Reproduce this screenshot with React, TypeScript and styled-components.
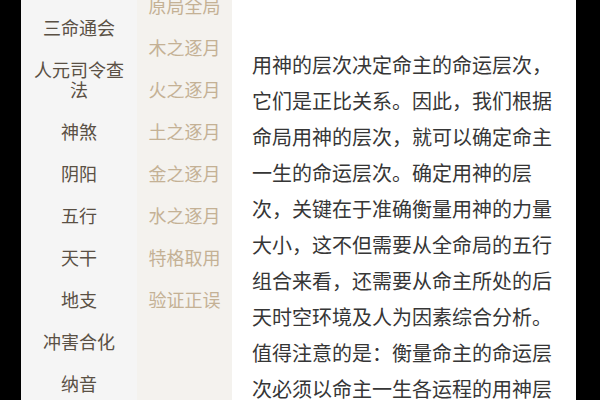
import styled, { createGlobalStyle } from 'styled-components';

const GlobalStyle = createGlobalStyle`
  html, body {
    margin: 0;
    padding: 0;
    background: #000;
  }
  body {
    font-family: "Noto Sans CJK SC", "Noto Sans", sans-serif;
  }
`;

const CATEGORIES = ['三命通会', '人元司令查法', '神煞', '阴阳', '五行', '天干', '地支', '冲害合化', '纳音'];

const SUB_TOPICS = ['原局全局', '木之逐月', '火之逐月', '土之逐月', '金之逐月', '水之逐月', '特格取用', '验证正误'];

const PARAGRAPHS = [
  '用神与命运层次的关系',
  '用神的层次决定命主的命运层次，它们是正比关系。因此，我们根据命局用神的层次，就可以确定命主一生的命运层次。确定用神的层次，关键在于准确衡量用神的力量大小，这不但需要从全命局的五行组合来看，还需要从命主所处的后天时空环境及人为因素综合分析。值得注意的是：衡量命主的命运层次必须以命主一生各运程的用神层次综合衡量。',
];

const App = () => {
  return (
    <>
      <GlobalStyle />
      <Page>
        <CategoryColumn>
          {CATEGORIES.map((name) => (
            <CategoryItem key={name}>{name}</CategoryItem>
          ))}
        </CategoryColumn>
        <TopicColumn>
          <TopicList>
            {SUB_TOPICS.map((name) => (
              <TopicItem key={name}>{name}</TopicItem>
            ))}
          </TopicList>
        </TopicColumn>
        <Article>
          <ArticleBody>
            {PARAGRAPHS.map((text, i) => (
              <Paragraph key={i}>{text}</Paragraph>
            ))}
          </ArticleBody>
        </Article>
      </Page>
    </>
  );
};

export default App;

const Page = styled.div`
  display: flex;
  height: 400px;
  overflow: hidden;
  padding: 0 24px 0 21px;
  background: #000;
`;

const CategoryColumn = styled.nav`
  width: 116px;
  flex-shrink: 0;
  background: #f5f5f5;
  padding-top: 6px;
  display: flex;
  flex-direction: column;
`;

const CategoryItem = styled.div`
  padding: 11px 12px;
  font-size: 18px;
  line-height: 20px;
  color: #5a5044;
  text-align: center;
`;

const TopicColumn = styled.div`
  width: 95px;
  flex-shrink: 0;
  background: #f4f2ee;
`;

const TopicList = styled.div`
  margin-top: -16px;
  display: flex;
  flex-direction: column;
`;

const TopicItem = styled.div`
  padding: 11px 4px;
  font-size: 18px;
  line-height: 20px;
  color: #c4b195;
  text-align: center;
`;

const Article = styled.article`
  flex: 1;
  background: #fff;
  padding-left: 20px;
  overflow: hidden;
`;

const ArticleBody = styled.div`
  width: 304px;
  margin-top: -30px;
`;

const Paragraph = styled.p`
  margin: 0 0 41px;
  font-size: 20px;
  line-height: 36px;
  color: #363636;

  &:last-child {
    margin-bottom: 0;
  }
`;
